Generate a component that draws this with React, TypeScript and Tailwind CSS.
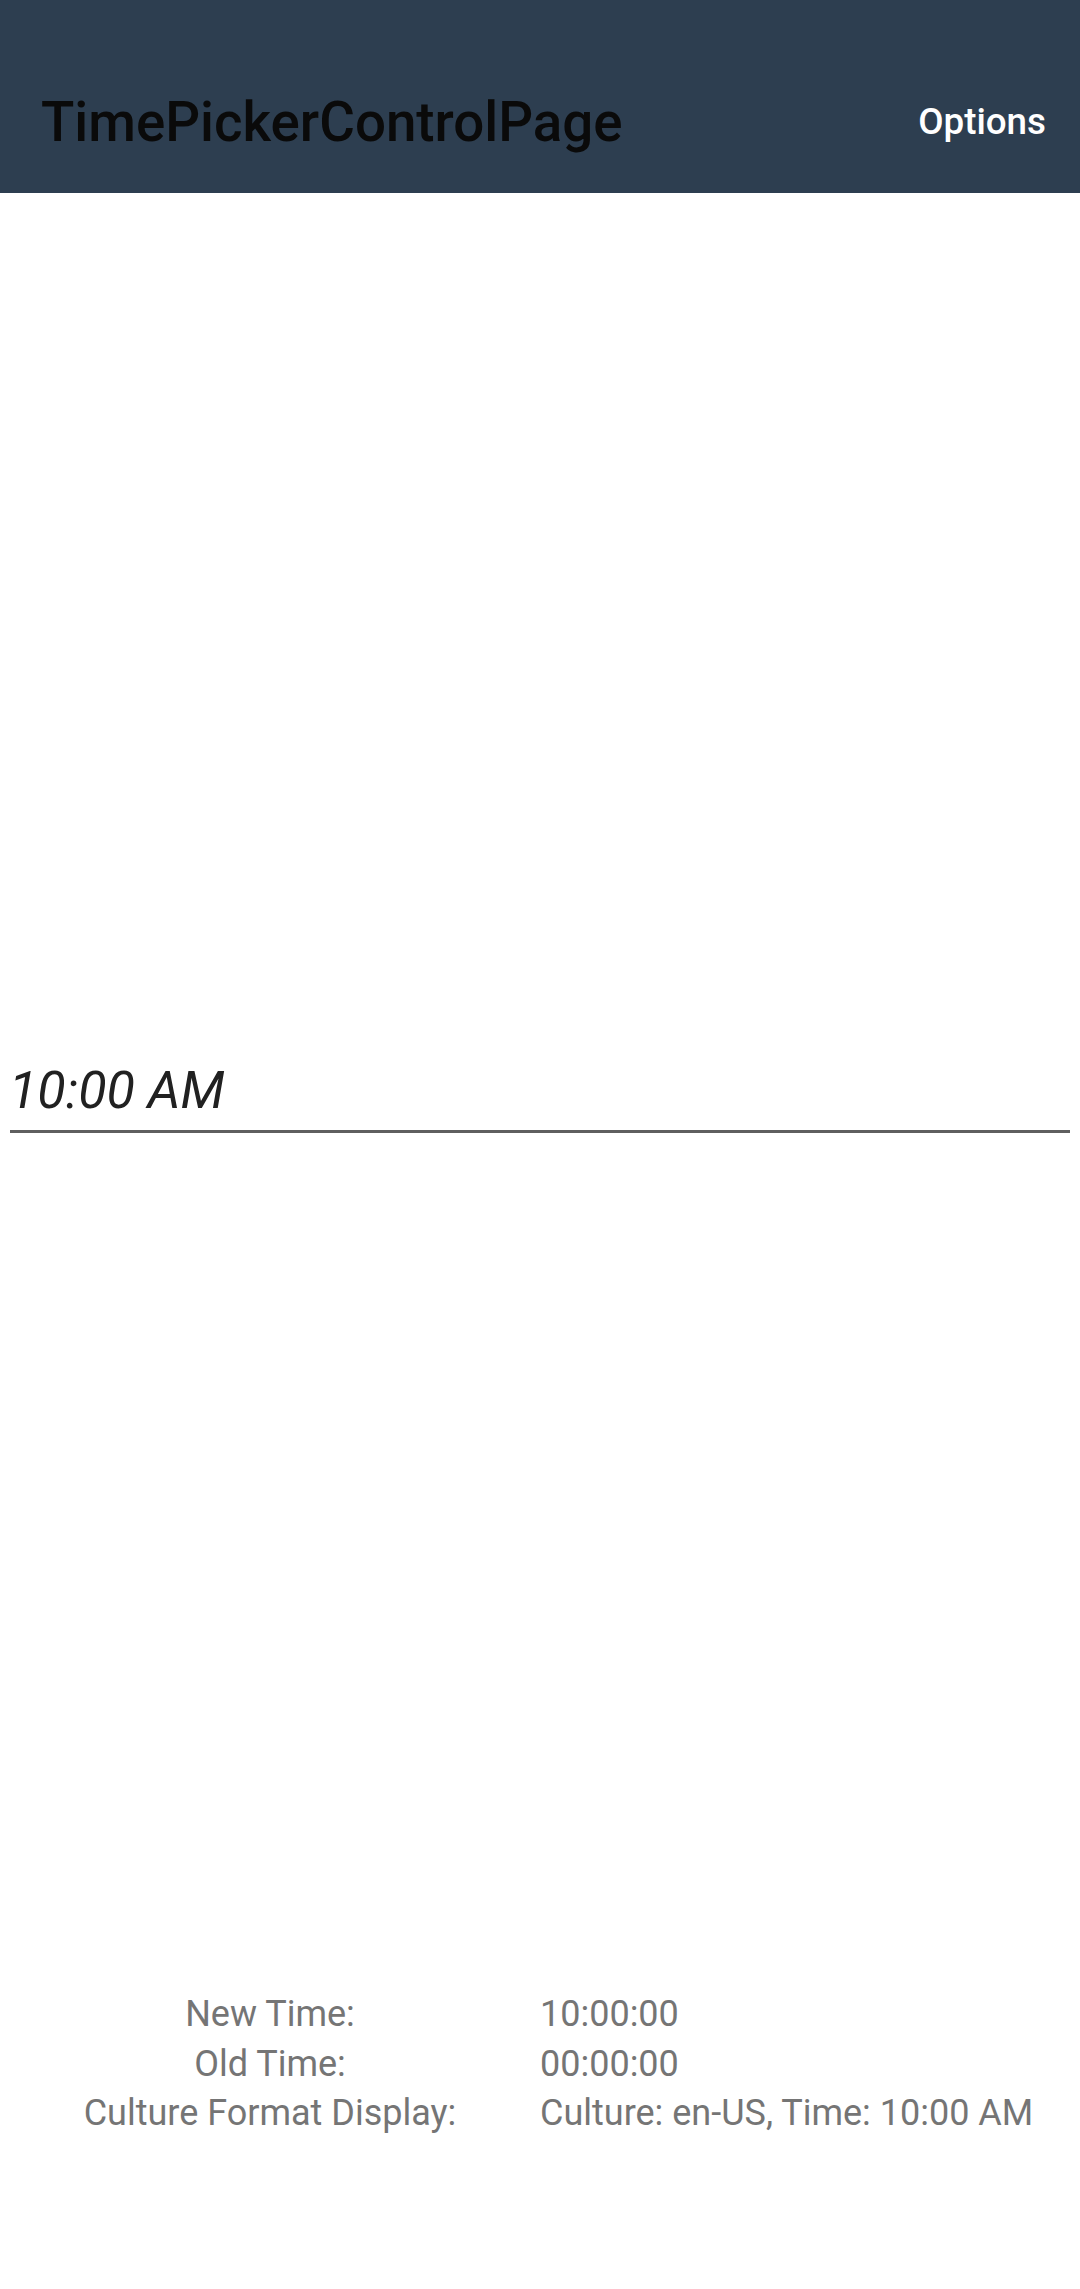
import React from 'react';

const rows = [
  { label: 'New Time:', value: '10:00:00' },
  { label: 'Old Time:', value: '00:00:00' },
  { label: 'Culture Format Display:', value: 'Culture: en-US, Time: 10:00 AM' },
];

export default function App() {
  return (
    <div className="min-h-[2289px] w-[1080px] bg-white font-['Roboto',sans-serif]">
      {/* Toolbar */}
      <div className="h-[193px] bg-[#2d3e50] pt-[46px]">
        <div className="flex h-[147px] items-center justify-between pt-[6px] pl-[41px] pr-[34px]">
          <h1 className="text-[54.7px] leading-none font-medium text-[#0a0a0a]">TimePickerControlPage</h1>
          <button className="text-[36.75px] leading-none font-medium text-white">Options</button>
        </div>
      </div>

      {/* Time picker */}
      <div className="mx-[10px] mt-[868px] border-b-[3px] border-[#5f5f5f] pb-[9px]">
        <span className="-ml-px block text-[52px] leading-[60px] italic text-[#212121]">10:00 AM</span>
      </div>

      {/* Results */}
      <div className="mt-[857px] grid grid-cols-[540px_1fr] text-[36px] leading-[49.6px] text-[#757575]">
        {rows.map((row) => (
          <React.Fragment key={row.label}>
            <div className="text-center">{row.label}</div>
            <div>{row.value}</div>
          </React.Fragment>
        ))}
      </div>
    </div>
  );
}
